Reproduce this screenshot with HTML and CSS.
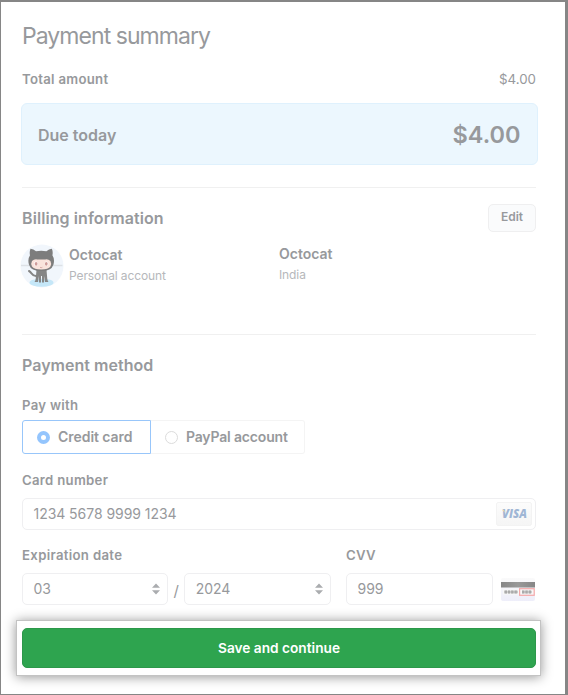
FILE: index.html
```html
<!DOCTYPE html>
<html lang="en">
<head>
<meta charset="utf-8">
<title>Payment summary</title>
<link rel="stylesheet" href="styles.css">
</head>
<body>
<main class="page">
  <h1 class="title">Payment summary</h1>
  <div class="total"><span class="label">Total amount</span><span class="total-value">$4.00</span></div>
  <div class="due"><span class="due-label">Due today</span><span class="due-value">$4.00</span></div>

  <section class="billing">
    <header class="billing-head"><h2 class="heading">Billing information</h2><button class="edit">Edit</button></header>
    <div class="accounts">
      <div class="account">
        <svg class="avatar" viewBox="0 0 44 44">
          <circle cx="22" cy="22" r="21.5" fill="#f1f6fc"/>
          <path d="M1 21.500h10M42.500 21.500h-10" stroke="#dde1e6" stroke-width="1.500"/>
          <ellipse cx="21.500" cy="38.700" rx="12" ry="4" fill="#c5e7f8"/>
          <path d="M17 32c-5 1-5-3.500-8-5" fill="none" stroke="#858585" stroke-width="2" stroke-linecap="round"/>
          <path d="M16.500 26h10l.8 9q.5 2.500 1.200 3h-3.500l-.8-6-.2 6.500h-2v-6.500h-1v6.500h-2l-.2-6.500-.8 6h-3.500q.7-.5 1.200-3z" fill="#858585"/>
          <path d="M10.500 4.800q3 0 5.500 2.500 5.200-1 10.400 0 2.500-2.500 5.500-2.500 1.300 3 .5 6.500 2.600 4 1 9.500-2 6.300-12.200 6.300T9 20.800q-1.600-5.500 1-9.500-.8-3.500.5-6.500z" fill="#7d7d7d"/>
          <path d="M12 17q2-2 5-1.600 4.200.4 8.400 0 3-.4 5 1.600 1.600 3 0 5.500-2 3-9.200 3t-9.200-3q-1.600-2.500 0-5.500z" fill="#fae4dc"/>
          <ellipse cx="15.900" cy="19.700" rx="1.900" ry="2.300" fill="#fff"/><ellipse cx="26.500" cy="19.700" rx="1.900" ry="2.300" fill="#fff"/>
          <ellipse cx="16.100" cy="19.800" rx="1.400" ry="1.900" fill="#cf9c99"/><ellipse cx="26.300" cy="19.800" rx="1.400" ry="1.900" fill="#cf9c99"/>
          <path d="M20 23.300q1.200.8 2.400 0" fill="none" stroke="#cf9c99" stroke-width=".8"/>
        </svg>
        <div class="who"><b class="name">Octocat</b><span class="detail">Personal account</span></div>
      </div>
      <div class="place"><b class="name">Octocat</b><span class="detail">India</span></div>
    </div>
  </section>

  <section class="method">
    <h2 class="heading method-heading">Payment method</h2>
    <div class="label pay-with">Pay with</div>
    <div class="tabs">
      <div class="tab tab-on"><i class="radio radio-on"></i><span>Credit card</span></div>
      <div class="tab tab-off"><i class="radio"></i><span>PayPal account</span></div>
    </div>
    <div class="label card-label">Card number</div>
    <div class="field card-field"><span>1234 5678 9999 1234</span>
      <svg class="visa" viewBox="0 0 36 24">
        <defs><linearGradient id="v" x2="0" y2="1"><stop stop-color="#fcfcfc"/><stop offset="1" stop-color="#f5f5f5"/></linearGradient></defs>
        <rect x=".5" y=".5" width="35" height="23" rx="1.500" fill="url(#v)" stroke="#f3f3f3"/>
        <text class="visa-text" x="6" y="16" textLength="25" lengthAdjust="spacingAndGlyphs">VISA</text>
        <path d="M6 7.700h2l1 3z" fill="#efd9a2"/>
      </svg>
    </div>
    <div class="expiry">
      <div class="date">
        <div class="label exp-label">Expiration date</div>
        <div class="selects">
          <div class="field select"><span>03</span><svg class="arrows" viewBox="0 0 8 12"><path d="M0 4.700L4 .5l4 4.200zM0 7.300h8L4 11.500z"/></svg></div>
          <span class="slash">/</span>
          <div class="field select"><span>2024</span><svg class="arrows" viewBox="0 0 8 12"><path d="M0 4.700L4 .5l4 4.200zM0 7.300h8L4 11.500z"/></svg></div>
        </div>
      </div>
      <div class="cvv">
        <div class="label cvv-label">CVV</div>
        <div class="cvv-row">
          <div class="field cvv-field"><span>999</span></div>
          <svg class="back" viewBox="0 0 34 23">
            <defs><linearGradient id="c" x2="0" y2="1"><stop stop-color="#fafafa"/><stop offset="1" stop-color="#eeeefa"/></linearGradient>
            <linearGradient id="s"><stop stop-color="#868686"/><stop offset=".5" stop-color="#999"/><stop offset="1" stop-color="#868686"/></linearGradient></defs>
            <rect width="34" height="23" rx="2" fill="url(#c)"/>
            <path d="M0 4h34v5.500H0z" fill="url(#s)"/>
            <path d="M2 11.500h31v5H2z" fill="#f8f8f8"/>
            <path d="M3.500 14H17M21 14h10" stroke="#999" stroke-width="3" stroke-dasharray="2.500 .8"/>
            <path d="M3.500 14H17M21 14h10" stroke="#bbb" stroke-width="1"/>
            <rect x="18.600" y="10.700" width="14.600" height="6.600" fill="none" stroke="#f5a9a9" stroke-width="1.200"/>
          </svg>
        </div>
      </div>
    </div>
  </section>
  <div class="highlight"><button class="save">Save and continue</button></div>
</main>
</body>
</html>
```

FILE: styles.css
```css
* { box-sizing: border-box; }
body { margin: 0; font-family: Inter, "Liberation Sans", sans-serif; font-size: 14px; color: #97999c; background: #fff; }
h1, h2 { margin: 0; }
button { font-family: inherit; padding: 0; }
.page { height: 695px; border: solid #868686; border-width: 2px 3px 1px 1px; padding: 18px 29px 0 21px; overflow: hidden; }
.title { height: 34px; line-height: 33px; font-size: 23px; font-weight: 400; letter-spacing: -.95px; }
.label { font-size: 13.2px; font-weight: 600; line-height: 20px; letter-spacing: .28px; }
.total { display: flex; justify-content: space-between; align-items: center; margin-top: 15px; height: 20px; }
.total-value { font-size: 13.3px; }
.due { display: flex; justify-content: space-between; align-items: center; margin: 14px -1.5px 0 -1px; height: 62px; padding: 1px 16px 0 16px; border: 1px solid #dff1fd; border-radius: 6px; background: #ecf7fe; }
.due-label { font-size: 16px; font-weight: 600; }
.due-value { font-size: 23.5px; font-weight: 600; }
.billing { margin-top: 22px; height: 147px; border-top: 1px solid #f0f0f0; padding-top: 16px; }
.billing-head { display: flex; justify-content: space-between; align-items: center; height: 28px; }
.heading { font-size: 16px; font-weight: 600; line-height: 28px; letter-spacing: .08px; }
.method-heading { height: 28px; line-height: 26px; letter-spacing: .03px; }
.edit { width: 48px; height: 28px; border: 1px solid #efeff0; border-radius: 5px; background: #fafbfc; color: #97999c; font-size: 12px; font-weight: 600; line-height: 24px; padding-bottom: 2px; }
.accounts { display: flex; margin-top: 12px; }
.account { display: flex; width: 257px; margin-left: -2px; }
.avatar { width: 44px; height: 44px; }
.who { display: flex; flex-direction: column; margin-left: 5px; padding-top: 2px; }
.place { display: flex; flex-direction: column; padding-top: 1px; margin-left: 2px; }
.name { font-size: 14px; font-weight: 600; line-height: 18px; margin-bottom: 2px; }
.detail { font-size: 12px; line-height: 20px; letter-spacing: -.1px; color: #b6b8bb; }
.method { border-top: 1px solid #f0f0f0; padding-top: 17px; height: 286px; }
.pay-with { margin-top: 15px; }
.tabs { display: flex; margin-top: 5px; height: 34px; }
.tab { display: flex; align-items: center; gap: 8px; padding: 0 14px; font-weight: 600; white-space: nowrap; letter-spacing: -.05px; border: 1px solid #f4f4f4; }
.tab span { padding-bottom: 1px; }
.tab-on { width: 129px; border-color: #98c6fa; border-radius: 3px 0 0 3px; }
.tab-off { width: 154px; border-left: 0; border-radius: 0 3px 3px 0; letter-spacing: -.17px; }
.radio { flex: none; width: 13px; height: 13px; border: 1px solid #dcdcdc; border-radius: 50%; }
.radio-on { border: 4px solid #94c5fd; }
.card-label { margin-top: 16px; }
.field { display: flex; align-items: center; height: 32px; border: 1px solid #efeff1; border-radius: 5px; padding-left: 10.5px; font-size: 14px; letter-spacing: -.05px; }
.field span { padding-bottom: 2px; }
.card-field { justify-content: space-between; margin-top: 8px; padding-right: 3px; }
.visa { width: 36px; height: 24px; }
.visa-text { font: italic 800 11.5px "Open Sans", sans-serif; letter-spacing: 0; fill: #9fb6d5; }
.expiry { display: flex; justify-content: space-between; margin-top: 15px; }
.exp-label { letter-spacing: .32px; }
.date { width: 308.5px; }
.selects { display: flex; justify-content: space-between; margin-top: 8px; }
.select { width: 146.3px; justify-content: space-between; padding-right: 7px; }
.arrows { width: 8px; height: 12px; fill: #aaacaf; }
.slash { font-size: 15px; line-height: 36px; height: 32px; }
.cvv { width: 190px; }
.cvv-row { display: flex; align-items: center; justify-content: space-between; margin-top: 8px; padding-right: 1px; }
.cvv-field { width: 147px; }
.back { width: 34px; height: 23px; }
.highlight { margin: 0 -5px 0 -6px; height: 56px; padding: 7px 4px 7px 5px; background: #fff; border: 1px solid #c3c3c3; box-shadow: 0 1px 11px rgba(0, 0, 0, .42); }
.save { display: block; width: 100%; height: 40px; border: 1px solid #2c984a; border-radius: 5px; background: #2ea44f; color: #fff; font-size: 13.7px; font-weight: 600; }
```
